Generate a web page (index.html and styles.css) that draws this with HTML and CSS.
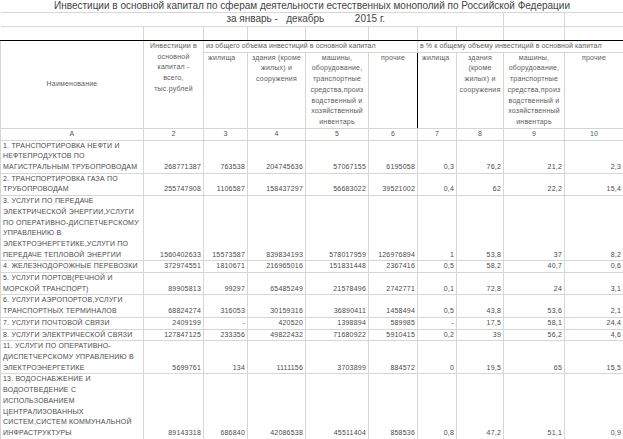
FILE: index.html
```html
<!DOCTYPE html>
<html lang="ru">
<head>
<meta charset="utf-8">
<title>Инвестиции в основной капитал</title>
<link rel="stylesheet" href="styles.css">
</head>
<body>
<table class="sheet">
  <colgroup>
    <col class="c-a"><col class="c-2"><col class="c-3"><col class="c-4"><col class="c-5">
    <col class="c-6"><col class="c-7"><col class="c-8"><col class="c-9"><col class="c-10">
  </colgroup>
  <tr class="r-title">
    <td colspan="10" class="title">Инвестиции в основной капитал по сферам деятельности естественных монополий по Российской Федерации</td>
  </tr>
  <tr class="r-sub">
    <td colspan="8" class="subtitle">за январь -&nbsp;&nbsp; декабрь&nbsp;&nbsp;&nbsp;&nbsp;&nbsp;&nbsp;&nbsp;&nbsp;&nbsp;&nbsp; 2015 г.</td>
    <td class="blank"></td><td class="blank edge"></td>
  </tr>
  <tr class="r-empty">
    <td class="blank first"></td><td class="blank"></td><td class="blank"></td><td class="blank"></td><td class="blank"></td>
    <td class="blank"></td><td class="blank"></td><td class="blank"></td><td class="blank"></td><td class="blank edge"></td>
  </tr>
  <tr class="r-h1">
    <td rowspan="2" class="hd name">Наименование</td>
    <td rowspan="2" class="hd total">Инвестиции в<br>основной<br>капитал -<br>всего,<br>тыс.рублей</td>
    <td colspan="4" class="hd group g1">из общего объема инвестиций в основной капитал</td>
    <td colspan="4" class="hd group g2">в % к общему объему инвестиций в основной капитал</td>
  </tr>
  <tr class="r-h2">
    <td class="hd sub gl left">жилища</td>
    <td class="hd sub">здания (кроме<br>жилых) и<br>сооружения</td>
    <td class="hd sub">машины,<br>оборудование,<br>транспортные<br>средства,произ<br>водственный и<br>хозяйственный<br>инвентарь</td>
    <td class="hd sub gr">прочие</td>
    <td class="hd sub gl left">жилища</td>
    <td class="hd sub">здания<br>(кроме<br>жилых) и<br>сооружения</td>
    <td class="hd sub">машины,<br>оборудование,<br>транспортные<br>средства,произ<br>водственный и<br>хозяйственный<br>инвентарь</td>
    <td class="hd sub gr">прочие</td>
  </tr>
  <tr class="r-num">
    <td class="nm">А</td><td class="nm">2</td><td class="nm">3</td><td class="nm">4</td><td class="nm">5</td>
    <td class="nm">6</td><td class="nm">7</td><td class="nm">8</td><td class="nm">9</td><td class="nm">10</td>
  </tr>
  <tr>
    <td class="lbl">1. ТРАНСПОРТИРОВКА НЕФТИ И<br>НЕФТЕПРОДУКТОВ ПО<br>МАГИСТРАЛЬНЫМ ТРУБОПРОВОДАМ</td>
    <td class="v">268771387</td><td class="v">763538</td><td class="v">204745636</td><td class="v">57067155</td><td class="v">6195058</td>
    <td class="v">0,3</td><td class="v">76,2</td><td class="v">21,2</td><td class="v">2,3</td>
  </tr>
  <tr>
    <td class="lbl">2. ТРАНСПОРТИРОВКА ГАЗА ПО<br>ТРУБОПРОВОДАМ</td>
    <td class="v">255747908</td><td class="v">1106587</td><td class="v">158437297</td><td class="v">56683022</td><td class="v">39521002</td>
    <td class="v">0,4</td><td class="v">62</td><td class="v">22,2</td><td class="v">15,4</td>
  </tr>
  <tr>
    <td class="lbl">3. УСЛУГИ ПО ПЕРЕДАЧЕ<br>ЭЛЕКТРИЧЕСКОЙ ЭНЕРГИИ,УСЛУГИ<br>ПО ОПЕРАТИВНО-ДИСПЕТЧЕРСКОМУ<br>УПРАВЛЕНИЮ В<br>ЭЛЕКТРОЭНЕРГЕТИКЕ,УСЛУГИ ПО<br>ПЕРЕДАЧЕ ТЕПЛОВОЙ ЭНЕРГИИ</td>
    <td class="v">1560402633</td><td class="v">15573587</td><td class="v">839834193</td><td class="v">578017959</td><td class="v">126976894</td>
    <td class="v">1</td><td class="v">53,8</td><td class="v">37</td><td class="v">8,2</td>
  </tr>
  <tr>
    <td class="lbl">4. ЖЕЛЕЗНОДОРОЖНЫЕ ПЕРЕВОЗКИ</td>
    <td class="v">372974551</td><td class="v">1810671</td><td class="v">216965016</td><td class="v">151831448</td><td class="v">2367416</td>
    <td class="v">0,5</td><td class="v">58,2</td><td class="v">40,7</td><td class="v">0,6</td>
  </tr>
  <tr>
    <td class="lbl">5. УСЛУГИ ПОРТОВ(РЕЧНОЙ И<br>МОРСКОЙ ТРАНСПОРТ)</td>
    <td class="v">89905813</td><td class="v">99297</td><td class="v">65485249</td><td class="v">21578496</td><td class="v">2742771</td>
    <td class="v">0,1</td><td class="v">72,8</td><td class="v">24</td><td class="v">3,1</td>
  </tr>
  <tr>
    <td class="lbl">6. УСЛУГИ АЭРОПОРТОВ,УСЛУГИ<br>ТРАНСПОРТНЫХ ТЕРМИНАЛОВ</td>
    <td class="v">68824274</td><td class="v">316053</td><td class="v">30159316</td><td class="v">36890411</td><td class="v">1458494</td>
    <td class="v">0,5</td><td class="v">43,8</td><td class="v">53,6</td><td class="v">2,1</td>
  </tr>
  <tr>
    <td class="lbl">7. УСЛУГИ ПОЧТОВОЙ СВЯЗИ</td>
    <td class="v">2409199</td><td class="v">-</td><td class="v">420520</td><td class="v">1398894</td><td class="v">589985</td>
    <td class="v">-</td><td class="v">17,5</td><td class="v">58,1</td><td class="v">24,4</td>
  </tr>
  <tr>
    <td class="lbl">8. УСЛУГИ ЭЛЕКТРИЧЕСКОЙ СВЯЗИ</td>
    <td class="v">127847125</td><td class="v">233356</td><td class="v">49822432</td><td class="v">71680922</td><td class="v">5910415</td>
    <td class="v">0,2</td><td class="v">39</td><td class="v">56,2</td><td class="v">4,6</td>
  </tr>
  <tr>
    <td class="lbl">11. УСЛУГИ ПО ОПЕРАТИВНО-<br>ДИСПЕТЧЕРСКОМУ УПРАВЛЕНИЮ В<br>ЭЛЕКТРОЭНЕРГЕТИКЕ</td>
    <td class="v">5699761</td><td class="v">134</td><td class="v">1111156</td><td class="v">3703899</td><td class="v">884572</td>
    <td class="v">0</td><td class="v">19,5</td><td class="v">65</td><td class="v">15,5</td>
  </tr>
  <tr>
    <td class="lbl">13. ВОДОСНАБЖЕНИЕ И<br>ВОДООТВЕДЕНИЕ С<br>ИСПОЛЬЗОВАНИЕМ<br>ЦЕНТРАЛИЗОВАННЫХ<br>СИСТЕМ,СИСТЕМ КОММУНАЛЬНОЙ<br>ИНФРАСТРУКТУРЫ</td>
    <td class="v">89143318</td><td class="v">686840</td><td class="v">42086538</td><td class="v">45511404</td><td class="v">858536</td>
    <td class="v">0,8</td><td class="v">47,2</td><td class="v">51,1</td><td class="v">0,9</td>
  </tr>
</table>
</body>
</html>
```

FILE: styles.css
```css
html, body {
  margin: 0;
  padding: 0;
  background: #ffffff;
}

.sheet {
  border-collapse: collapse;
  table-layout: fixed;
  width: 623px;
  font-family: "Liberation Sans", Arial, sans-serif;
  font-size: 7px;
  letter-spacing: 0.2px;
  color: #4a4a4a;
}

.c-a { width: 143px; }
.c-2 { width: 60px; }
.c-3 { width: 44px; }
.c-4 { width: 58px; }
.c-5 { width: 63px; }
.c-6 { width: 49px; }
.c-7 { width: 39px; }
.c-8 { width: 47px; }
.c-9 { width: 61px; }
.c-10 { width: 59px; }

.sheet td {
  border: 1px solid #d6d6d6;
  padding: 0 2px;
  white-space: nowrap;
  overflow: hidden;
  line-height: 10.7px;
}

/* top title rows */
.r-title td { height: 12px; }
.r-sub td, .r-empty td { height: 13px; }

.title {
  text-align: center;
  font-size: 10px;
  letter-spacing: 0;
  color: #444444;
  border-top: none !important;
  border-left: none !important;
  border-right: none !important;
}

.subtitle {
  text-align: center;
  padding-left: 110px !important;
  font-size: 10px;
  letter-spacing: 0;
  color: #444444;
  border-left: none !important;
}

.r-empty td {
  border-bottom: 1px solid #000000;
}
.blank.first { border-left: none; }

/* header */
.hd {
  color: #5c5c5c;
  line-height: 10px;
  border: 1px solid #000000;
  text-align: center;
}

.r-h1 td { height: 8px; }

.name {
  vertical-align: middle;
}

.total {
  vertical-align: top;
  padding-top: 1px;
}

.group {
  text-align: left;
  vertical-align: top;
  border-bottom: 1px solid #d6d6d6;
  overflow: visible;
  letter-spacing: 0.1px;
}
.g1 { padding-left: 10px; }
.g2 { padding-left: 2px; }

.sub {
  vertical-align: top;
  border-top: 1px solid #d6d6d6;
  border-left: 1px solid #d6d6d6;
  border-right: 1px solid #d6d6d6;
  padding-top: 3px;
  height: 69px;
}
.sub.gl { border-left: 1px solid #000000; }
.sub.gr { border-right: 1px solid #000000; }
.sub.left { text-align: left; padding-left: 4px; }

/* column number row */
.nm {
  border: 1px solid #000000;
  text-align: center;
  color: #555555;
  height: 11px;
  line-height: 10px;
}

/* data */
.lbl {
  vertical-align: top;
  padding-top: 1px;
  padding-bottom: 1px;
}

.v {
  text-align: right;
  vertical-align: bottom;
  padding-bottom: 1px;
}
```
